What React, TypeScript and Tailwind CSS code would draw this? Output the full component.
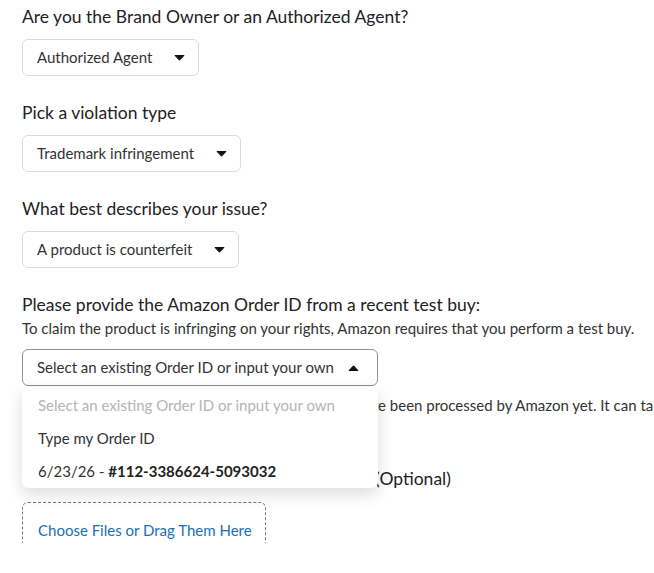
import React from "react";

function Caret({ up }: { up?: boolean }) {
    return (
        <svg width="11" height="6" viewBox="0 0 11 6" className="shrink-0">
            {up ? (
                <path d="M1 5.5 L5.5 0.8 L10 5.5 Z" fill="#111" stroke="#111" strokeWidth="1" strokeLinejoin="round" />
            ) : (
                <path d="M1 0.5 L10 0.5 L5.5 5.2 Z" fill="#111" stroke="#111" strokeWidth="1" strokeLinejoin="round" />
            )}
        </svg>
    );
}

function Select({ value }: { value: string }) {
    return (
        <div className="inline-flex h-[37px] items-center gap-[22px] rounded-md border border-[#d9dcdc] bg-white pl-[14px] pr-[13px] text-[15px] text-[#333]">
            <span>{value}</span>
            <Caret />
        </div>
    );
}

export default function App() {
    const font = { fontFamily: "Lato, 'Open Sans', sans-serif" };
    return (
        <div className="h-[543px] w-[654px] overflow-hidden bg-white" style={font}>
            <div className="px-[22px] pt-[6px] text-[#222]">
                <div className="text-[17.5px] leading-[22px]">Are you the Brand Owner or an Authorized Agent?</div>
                <div className="mt-[11px]">
                    <Select value="Authorized Agent" />
                </div>

                <div className="mt-[26px] text-[17.5px] leading-[22px]">Pick a violation type</div>
                <div className="mt-[11px]">
                    <Select value="Trademark infringement" />
                </div>

                <div className="mt-[26px] text-[17.5px] leading-[22px]">What best describes your issue?</div>
                <div className="mt-[11px]">
                    <Select value="A product is counterfeit" />
                </div>

                <div className="mt-[26px] text-[17.5px] leading-[22px]">Please provide the Amazon Order ID from a recent test buy:</div>
                <div className="mt-[2px] whitespace-nowrap text-[15px] leading-[20px] text-[#333]">
                    To claim the product is infringing on your rights, Amazon requires that you perform a test buy.
                </div>

                <div className="relative mt-[11px] w-[356px]">
                    <div className="flex h-[37px] items-center justify-between rounded-md border border-[#8d9096] bg-white pl-[14px] pr-[18px] text-[15px] text-[#333]">
                        <span>Select an existing Order ID or input your own</span>
                        <Caret up />
                    </div>
                    <div className="absolute left-0 top-[38px] z-10 w-[356px] rounded-md bg-white pt-[2px] shadow-[0_6px_16px_rgba(0,0,0,0.14)]">
                        <div className="flex h-[33px] items-center px-[16px] text-[15px] text-[#b4b4b4]">Select an existing Order ID or input your own</div>
                        <div className="flex h-[33px] items-center px-[16px] text-[15px] text-[#333]">Type my Order ID</div>
                        <div className="flex h-[33px] items-center px-[16px] text-[15px] text-[#333]">
                            6/23/26 -&nbsp;<span className="font-bold text-[#222]">#112-3386624-5093032</span>
                        </div>
                    </div>
                </div>

                <div className="mt-[9px] whitespace-nowrap text-[15px] leading-[20px] text-[#333]">
                    Don't see your order? Orders placed lately can not have been processed by Amazon yet. It can take up to 48 hours.
                </div>

                <div className="mt-[53px] whitespace-nowrap text-[17.5px] leading-[22px]">
                    Upload pictures of the products you received&nbsp; (Optional)
                </div>

                <div className="mt-[12px] h-[60px] w-[244px] rounded-md border border-dashed border-[#777] pl-[15px] pt-[17px] text-[15px] leading-[20px] text-[#1a6fb8]">
                    Choose Files or Drag Them Here
                </div>
            </div>
        </div>
    );
}
